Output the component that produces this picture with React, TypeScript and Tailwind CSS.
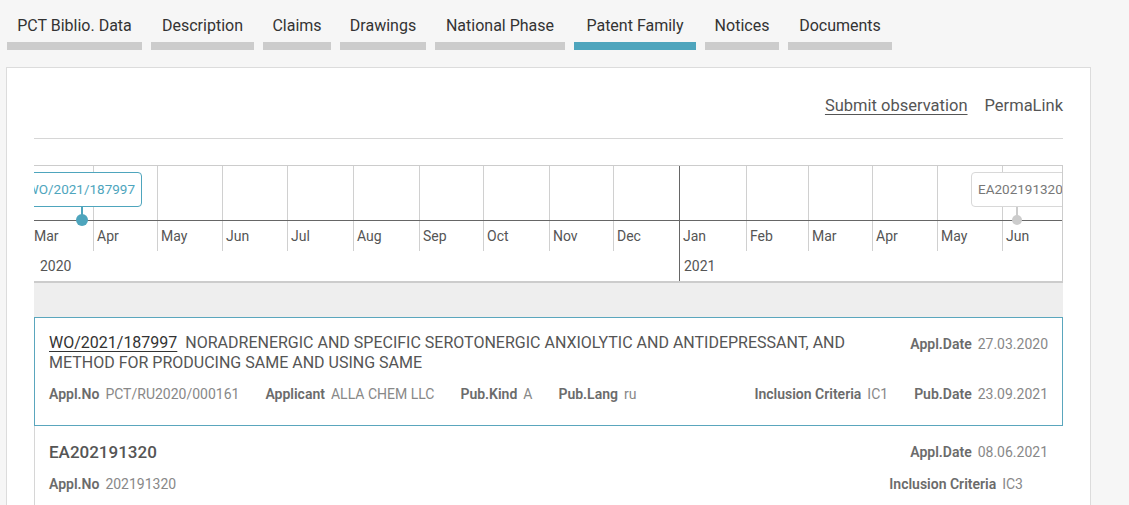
const tabs = [
  { label: "PCT Biblio. Data", w: "w-[135px]" },
  { label: "Description", w: "w-[103px]" },
  { label: "Claims", w: "w-[68px]" },
  { label: "Drawings", w: "w-[86px]" },
  { label: "National Phase", w: "w-[130px]" },
  { label: "Patent Family", w: "w-[122px]", active: true },
  { label: "Notices", w: "w-[74px]" },
  { label: "Documents", w: "w-[104px]" },
];

// x positions (px, relative to timeline left edge) of each month start
const months = [
  { m: "Mar", x: -4 },
  { m: "Apr", x: 59 },
  { m: "May", x: 123 },
  { m: "Jun", x: 188 },
  { m: "Jul", x: 253 },
  { m: "Aug", x: 319 },
  { m: "Sep", x: 385 },
  { m: "Oct", x: 449 },
  { m: "Nov", x: 515 },
  { m: "Dec", x: 579 },
  { m: "Jan", x: 645, year: true },
  { m: "Feb", x: 712 },
  { m: "Mar", x: 774 },
  { m: "Apr", x: 838 },
  { m: "May", x: 903 },
  { m: "Jun", x: 968 },
];

function Field({ label, value }: { label: string; value: string }) {
  return (
    <span className="flex items-baseline gap-[6px] whitespace-nowrap">
      <span className="font-semibold text-[#6b6b6b]">{label}</span>
      <span className="text-[#888]">{value}</span>
    </span>
  );
}

function Timeline() {
  return (
    <div className="relative h-[116px] overflow-hidden border-t border-[#ccc] border-r">
      {months.map((mo, i) => (
        <div key={i}>
          <div
            className={mo.year ? "absolute top-0 h-[116px] w-px bg-[#666]" : "absolute top-0 h-[85px] w-px bg-[#d0d0d0]"}
            style={{ left: mo.x }}
          />
          <span className="absolute top-[60px] text-[14px] leading-[20px] text-[#555]" style={{ left: mo.x + 4 }}>
            {mo.m}
          </span>
        </div>
      ))}
      <span className="absolute left-[6px] top-[90px] text-[14px] leading-[20px] text-[#555]">2020</span>
      <span className="absolute left-[650px] top-[90px] text-[14px] leading-[20px] text-[#555]">2021</span>

      <div className="absolute left-0 right-0 top-[54px] h-px bg-[#666]" />

      {/* WO marker */}
      <div className="absolute left-[-14px] top-[6px] flex h-[35px] w-[122px] items-center justify-end rounded-[4px] border border-[#4ea5bd] bg-white pr-[6px] text-[13.5px] text-[#4ea5bd]">
        WO/2021/187997
      </div>
      <div className="absolute left-[47px] top-[41px] h-[11px] w-[2px] bg-[#4ea5bd]" />
      <div className="absolute left-[42px] top-[48px] h-[12px] w-[12px] rounded-full bg-[#4ea5bd]" />

      {/* EA marker */}
      <div className="absolute left-[937px] top-[6px] flex h-[35px] w-[110px] items-center rounded-[4px] border border-[#d8d8d8] bg-white pl-[6px] text-[13.5px] text-[#777]">
        EA202191320
      </div>
      <div className="absolute left-[982px] top-[41px] h-[9px] w-[2px] bg-[#ccc]" />
      <div className="absolute left-[978px] top-[49px] h-[10px] w-[10px] rounded-full bg-[#ccc]" />
    </div>
  );
}

export default function App() {
  return (
    <div className="h-[505px] overflow-hidden bg-[#f6f6f6] font-['Roboto',_'Liberation_Sans',_sans-serif]">
      <div className="flex gap-[9px] pl-[7px] pt-4">
        {tabs.map((t) => (
          <div key={t.label} className={`${t.w} flex flex-col`}>
            <span className="text-center text-[16px] leading-[20px] text-[#333]">{t.label}</span>
            <div className={t.active ? "mt-[6px] h-[8px] bg-[#4ea5bd]" : "mt-[6px] h-[8px] bg-[#cccccc]"} />
          </div>
        ))}
      </div>

      <div className="ml-[6px] mt-[17px] w-[1085px] border border-[#dcdcdc] bg-white px-[27px] pb-10">
        <div className="flex justify-end gap-[17px] pt-[28px] text-[16.5px] leading-[20px] text-[#555]">
          <a className="underline underline-offset-[3px]">Submit observation</a>
          <a>PermaLink</a>
        </div>
        <div className="mt-[22px] h-px bg-[#d6d6d6]" />

        <div className="mt-[26px]">
          <Timeline />
          <div className="h-[36px] border-t-2 border-[#ccc] bg-[#eeeeee]" />

          <div className="border-[1.5px] border-[#5aa6bd] px-[14px] pb-[20px] pt-[15px] text-[14px]">
            <div className="flex items-start justify-between gap-6">
              <div className="text-[16px] leading-[20px] text-[#555]">
                <span className="text-[#333] underline underline-offset-[3px]">WO/2021/187997</span>
                <span className="ml-[8px]">
                  NORADRENERGIC AND SPECIFIC SEROTONERGIC ANXIOLYTIC AND ANTIDEPRESSANT, AND METHOD FOR PRODUCING SAME AND USING SAME
                </span>
              </div>
              <div className="pt-px">
                <Field label="Appl.Date" value="27.03.2020" />
              </div>
            </div>
            <div className="mt-[11px] flex justify-between">
              <div className="flex gap-[26px]">
                <Field label="Appl.No" value="PCT/RU2020/000161" />
                <Field label="Applicant" value="ALLA CHEM LLC" />
                <Field label="Pub.Kind" value="A" />
                <Field label="Pub.Lang" value="ru" />
              </div>
              <div className="flex gap-[26px]">
                <Field label="Inclusion Criteria" value="IC1" />
                <Field label="Pub.Date" value="23.09.2021" />
              </div>
            </div>
          </div>

          <div className="border-l border-[#d6d6d6] pb-[20px] pl-[14px] pr-[15px] pt-[16px] text-[14px]">
            <div className="flex items-start justify-between">
              <span className="text-[17px] font-medium leading-[20px] text-[#555]">EA202191320</span>
              <Field label="Appl.Date" value="08.06.2021" />
            </div>
            <div className="mt-[11px] flex justify-between">
              <Field label="Appl.No" value="202191320" />
              <div className="pr-[25px]">
                <Field label="Inclusion Criteria" value="IC3" />
              </div>
            </div>
          </div>
        </div>
      </div>
    </div>
  );
}
